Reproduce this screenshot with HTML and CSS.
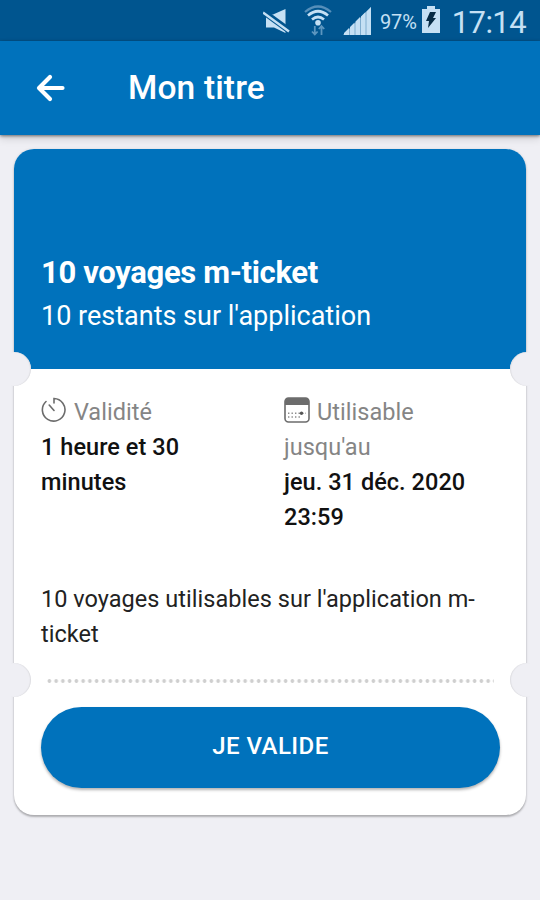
FILE: index.html
```html
<!DOCTYPE html>
<html lang="fr">
<head>
<meta charset="utf-8">
<title>Mon titre</title>
<link rel="stylesheet" href="styles.css">
</head>
<body>
<div class="status">
  <svg class="mute" width="28" height="28" viewBox="0 0 28 28"><path d="M3 6.500h7L22.500 1v24L11 19.500H3z" fill="#c5e0f4"/><path d="M0 3.500l26 19" stroke="#00558f" stroke-width="6"/><path d="M0 4.500l26 19" stroke="#c5e0f4" stroke-width="2.400"/></svg>
  <svg class="wifi" width="28" height="32" viewBox="0 0 28 32"><g fill="none" stroke="#c5e0f4" stroke-width="2.7"><path d="M1 8Q14-3 27 8" stroke="#568fba" stroke-width="2.2"/><path d="M4 11.5Q14 3 24 11.5"/><path d="M8 15.5Q14 10.5 20 15.5"/></g><circle cx="14" cy="18.8" r="2.8" fill="#c5e0f4"/><path d="M10.8 22v9M8 27.5l2.8 3 2.8-3M17.5 31v-9M14.8 25l2.7-3 2.7 3" fill="none" stroke="#5c96bf" stroke-width="1.8"/></svg>
  <svg class="signal" width="29" height="29" viewBox="0 0 29 29"><path d="M0 28L28 0v28z" fill="#7fadcf"/><path d="M1 28v-2l5-5v7zM7 28v-8l4.500-4.500V28zM12.500 28V14.500L17 10v18zM18 28V9.500l4.500-4.500v23zM23.500 28V4.500L28 0v28z" fill="#c5e0f4"/></svg>
  <span class="percent">97%</span>
  <svg class="battery" width="18" height="27" viewBox="0 0 18 27"><path d="M5 0h8v3h5v24H0V3h5z" fill="#c5e0f4"/><path d="M8 6h6l-3 6h3L6 22l1-7H4z" fill="#062b45"/></svg>
  <span class="clock">17:14</span>
</div>
<header class="bar">
  <svg class="back" width="30" height="28" viewBox="0 0 30 28"><path d="M26.500 14H3.500M14 3L3 14l11 11" fill="none" stroke="#fff" stroke-width="4.200" stroke-linecap="round" stroke-linejoin="round"/></svg>
  <h1 class="title">Mon titre</h1>
</header>
<main class="ticket">
  <section class="hero">
    <h2 class="name">10 voyages m-ticket</h2>
    <p class="left">10 restants sur l'application</p>
  </section>
  <section class="details">
    <div class="cols">
      <div class="col">
        <div class="label"><svg class="ico" width="26" height="26" viewBox="0 0 26 26"><path d="M13 6V1.500A11.300 11.300 0 1 1 5 4.500M13 13.500L8.200 8" fill="none" stroke="#6c6c6c" stroke-width="1.600" stroke-linecap="round"/></svg> Validité</div>
        <div class="value">1 heure et 30<br>minutes</div>
      </div>
      <div class="col">
        <div class="label"><svg class="ico" width="26" height="26" viewBox="0 0 26 26"><rect x="1" y="1" width="24" height="24" rx="3.500" fill="#fff" stroke="#6c6c6c" stroke-width="1.600"/><path d="M1 8V4.500Q1 1 4.500 1h17Q25 1 25 4.500V8z" fill="#6c6c6c"/><path d="M4 16.200h18M4 20h14" stroke="#8c8c8c" stroke-width="1.400" stroke-dasharray="1.400 2.100"/><circle cx="17.500" cy="16.200" r="1.700" fill="#555"/></svg> Utilisable<br>jusqu'au</div>
        <div class="value">jeu. 31 déc. 2020<br>23:59</div>
      </div>
    </div>
    <p class="desc">10 voyages utilisables sur l'application m-<br>ticket</p>
    <div class="dots"></div>
    <button class="go">JE VALIDE</button>
  </section>
  <i class="notch l top"></i><i class="notch r top"></i>
  <i class="notch l low"></i><i class="notch r low"></i>
</main>
</body>
</html>
```
FILE: styles.css
```css
* { box-sizing: border-box; }
body { margin: 0; height: 900px; overflow: hidden; background: #efeff4; font-family: Roboto, sans-serif; color: #111; }
h1, h2, p { margin: 0; }
.status { height: 41px; background: #00558f; display: flex; align-items: flex-start; justify-content: flex-end; padding-right: 14px; color: #c5e0f4; }
.mute { margin: 8px 13px 0 0; }
.wifi { margin: 4px 11px 0 0; }
.signal { margin: 7px 8px 0 0; }
.percent { font-size: 20px; line-height: 24px; margin: 10px 5px 0 0; letter-spacing: -.1px; }
.battery { margin: 6px 12px 0 0; }
.clock { font-size: 31px; line-height: 36px; margin-top: 5px; letter-spacing: -.6px; }
.bar { height: 94px; background: #0072bc; display: flex; align-items: center; padding-left: 36px; box-shadow: 0 1px 3px rgba(0,0,0,.5), 0 4px 8px rgba(0,0,0,.12); }
.title { margin-left: 62px; font-size: 33.500px; font-weight: 500; color: #fff; line-height: 40px; letter-spacing: .15px; }
.ticket { position: relative; margin: 14px 14px 0; height: 666px; border-radius: 20px; background: #fff; box-shadow: 0 2px 2px rgba(0,0,0,.25), 0 0 3px rgba(0,0,0,.1); }
.hero { height: 220px; background: #0072bc; border-radius: 20px 20px 0 0; padding: 104px 27px 0; color: #fff; }
.name { font-size: 31px; font-weight: 700; line-height: 40px; letter-spacing: -.35px; }
.left { font-size: 27px; line-height: 36px; margin-top: 5px; }
.details { padding: 26px 26px 0 27px; font-size: 23.500px; line-height: 35px; }
.cols { display: grid; grid-template-columns: 243px 1fr; height: 187px; letter-spacing: .05px; }
.label { color: #858585; }
.ico { vertical-align: -3px; margin-right: 1px; }
.value { font-weight: 500; }
.desc { letter-spacing: .03px; color: #222; }
.dots { height: 4px; margin: 27px 6px 0 5px; background: radial-gradient(circle, #cfcfcf 1.500px, transparent 2.200px) 0 0 / 6.750px 4px repeat-x; }
.go { display: block; width: 100%; height: 81px; margin-top: 24px; border: 0; border-radius: 41px; background: #0072bc; color: #fff; font: 500 24px Roboto, sans-serif; letter-spacing: .45px; padding-bottom: 4px; box-shadow: 0 2px 3px rgba(0,0,0,.3); }
.notch { position: absolute; width: 20px; height: 34px; background: #efeff4; }
.l { left: -3px; border-radius: 0 17px 17px 0; box-shadow: inset -1px 0 1px #dedee2; }
.r { right: -4px; border-radius: 17px 0 0 17px; box-shadow: inset 1px 0 1px #dedee2; }
.top { top: 203px; }
.low { top: 514px; }
```
